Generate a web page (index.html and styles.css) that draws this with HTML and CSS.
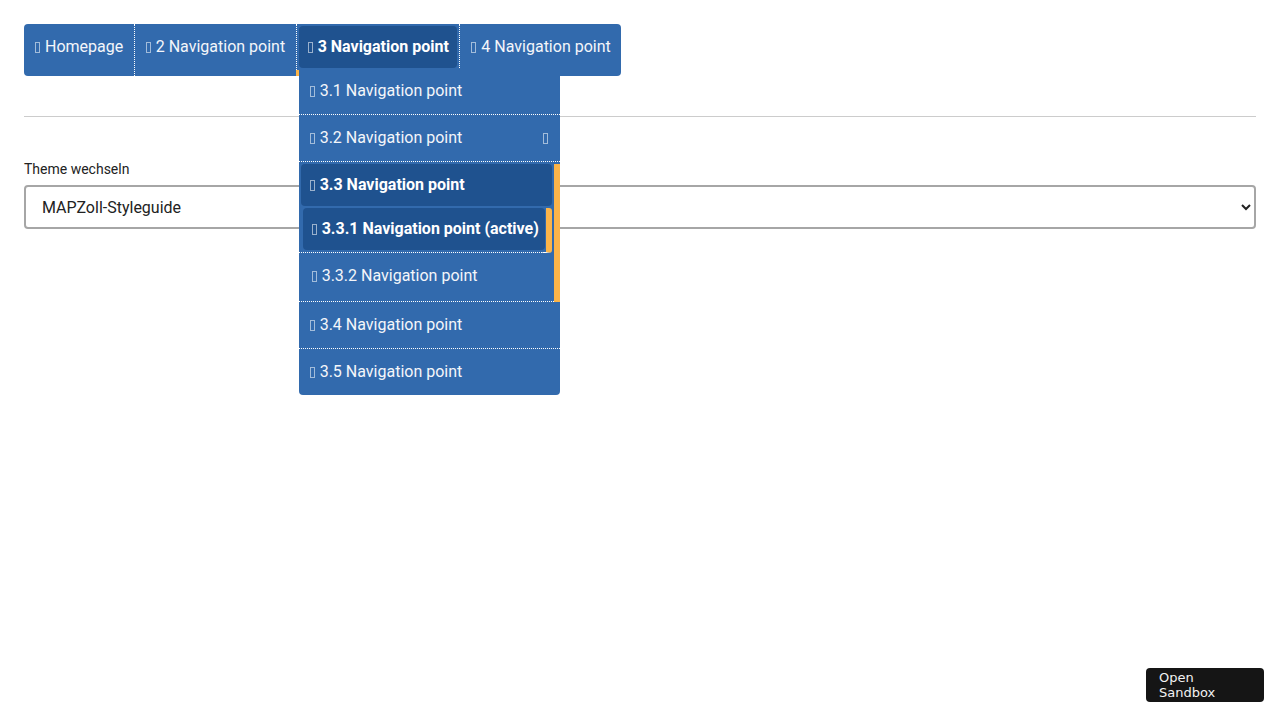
FILE: index.html
```html
<!DOCTYPE html>
<html lang="de">
<head>
<meta charset="utf-8">
<title>Navigation</title>
<link rel="stylesheet" href="styles.css">
</head>
<body>
<nav class="nav">
  <ul class="nav-list">
    <li class="nav-item"><a class="nav-link" href="#"><span class="ico"></span>Homepage</a></li>
    <li class="nav-item"><a class="nav-link" href="#"><span class="ico"></span>2 Navigation point</a></li>
    <li class="nav-item nav-item-open"><a class="nav-link nav-link-active" href="#"><span class="ico"></span>3 Navigation point</a>
      <ul class="dd">
        <li class="dd-item"><a class="dd-link" href="#"><span class="ico"></span>3.1 Navigation point</a></li>
        <li class="dd-item"><a class="dd-link dd-link-sub" href="#"><span><span class="ico"></span>3.2 Navigation point</span><span class="ico ico-right"></span></a></li>
        <li class="dd-group">
          <a class="dd-link dd-link-dark" href="#"><span class="ico"></span>3.3 Navigation point</a>
          <ul class="dd-nested">
            <li class="nested-item nested-active"><a class="nested-link nested-link-dark" href="#"><span class="ico"></span>3.3.1 Navigation point (active)</a></li>
            <li class="nested-item"><a class="nested-link nested-link-plain" href="#"><span class="ico"></span>3.3.2 Navigation point</a></li>
          </ul>
        </li>
        <li class="dd-item"><a class="dd-link" href="#"><span class="ico"></span>3.4 Navigation point</a></li>
        <li class="dd-item dd-last"><a class="dd-link" href="#"><span class="ico"></span>3.5 Navigation point</a></li>
      </ul>
    </li>
    <li class="nav-item nav-item-last"><a class="nav-link" href="#"><span class="ico"></span>4 Navigation point</a></li>
  </ul>
</nav>
<hr class="rule">
<label class="label" for="theme">Theme wechseln</label>
<select class="select" id="theme">
  <option>MAPZoll-Styleguide</option>
</select>
<a class="sandbox" href="#">Open Sandbox</a>
</body>
</html>
```
FILE: styles.css
```css
* { box-sizing: border-box; }
html, body { margin: 0; padding: 0; background: #fff; }
html { height: 100%; }
body {
  min-height: 100%;
  padding: 24px;
  font-family: Roboto, "Liberation Sans", sans-serif;
  font-size: 16px;
  color: #222;
}
a { text-decoration: none; color: inherit; }
ul { list-style: none; margin: 0; padding: 0; }

.nav { display: flex; }
.nav-list {
  display: flex;
  background: #326aad;
  border-radius: 4px;
  height: 52px;
}
.nav-item {
  position: relative;
  border-right: 1px dotted #fff;
}
.nav-item-last { border-right: 0; }
.nav-link {
  display: block;
  margin: 2px;
  padding: 10px 8.5px 10px 9px;
  line-height: 22px;
  color: #f4f6fa;
  border-radius: 4px;
  white-space: nowrap;
}
.nav-link-active {
  background: #1f528f;
  font-weight: 700;
  color: #fff;
}
.nav-item-open::after {
  content: "";
  position: absolute;
  left: -1px;
  top: 46px;
  width: 3px;
  height: 6px;
  background: #fbb449;
}

.ico {
  display: inline-block;
  width: 5px;
  height: 11px;
  border: 1px solid rgba(255,255,255,0.55);
  margin-right: 5px;
  vertical-align: -1px;
}
.ico-right { margin-right: 0; }

.dd {
  position: absolute;
  left: 2px;
  top: 44px;
  width: 261px;
  background: #326aad;
  border-radius: 0 0 4px 4px;
  z-index: 5;
  color: #f4f6fa;
}
.dd-item { border-bottom: 1px dotted #fff; }
.dd-last { border-bottom: 0; }
.dd-link {
  display: block;
  padding: 12px 11px;
  line-height: 22px;
  white-space: nowrap;
}
.dd-link-sub {
  display: flex;
  justify-content: space-between;
  align-items: center;
  padding-right: 12px;
}
.dd-group {
  border-right: 6px solid #fbb449;
}
.dd-link-dark {
  margin: 2px 2px 0 2px;
  padding: 10px 9px;
  background: #1f528f;
  border-radius: 4px;
  font-weight: 700;
  color: #fff;
}
.nested-item { border-bottom: 1px dotted #fff; }
.nested-active {
  margin-right: 2px;
  border-right: 6px solid #fbb449;
  border-radius: 0 3px 3px 0;
}
.nested-link {
  display: block;
  line-height: 22px;
  white-space: nowrap;
}
.nested-link-dark {
  margin: 2px 1px 2px 4px;
  padding: 10px 9px;
  background: #1f528f;
  border-radius: 4px;
  font-weight: 700;
  color: #fff;
}
.nested-link-plain {
  padding: 12px 11px 14px 13px;
}

.rule {
  margin: 40px 0 0 0;
  border: 0;
  border-top: 1px solid #cccccc;
  height: 0;
}
.label {
  display: block;
  margin-top: 42px;
  font-size: 14px;
  line-height: 20px;
  color: #222;
}
.select {
  display: block;
  width: 100%;
  height: 44px;
  margin-top: 6px;
  padding: 0 12px;
  font-family: Roboto, "Liberation Sans", sans-serif;
  font-size: 16px;
  color: #222;
  background: #fff;
  border: 2px solid #a6a6a6;
  border-radius: 4px;
}

.sandbox {
  position: fixed;
  right: 16px;
  bottom: 18px;
  width: 118px;
  padding: 2px 45px 2px 13px;
  background: #151515;
  color: #f2f2f2;
  border-radius: 4px;
  font-family: "DejaVu Sans", sans-serif;
  font-size: 13px;
  line-height: 15px;
}
```
